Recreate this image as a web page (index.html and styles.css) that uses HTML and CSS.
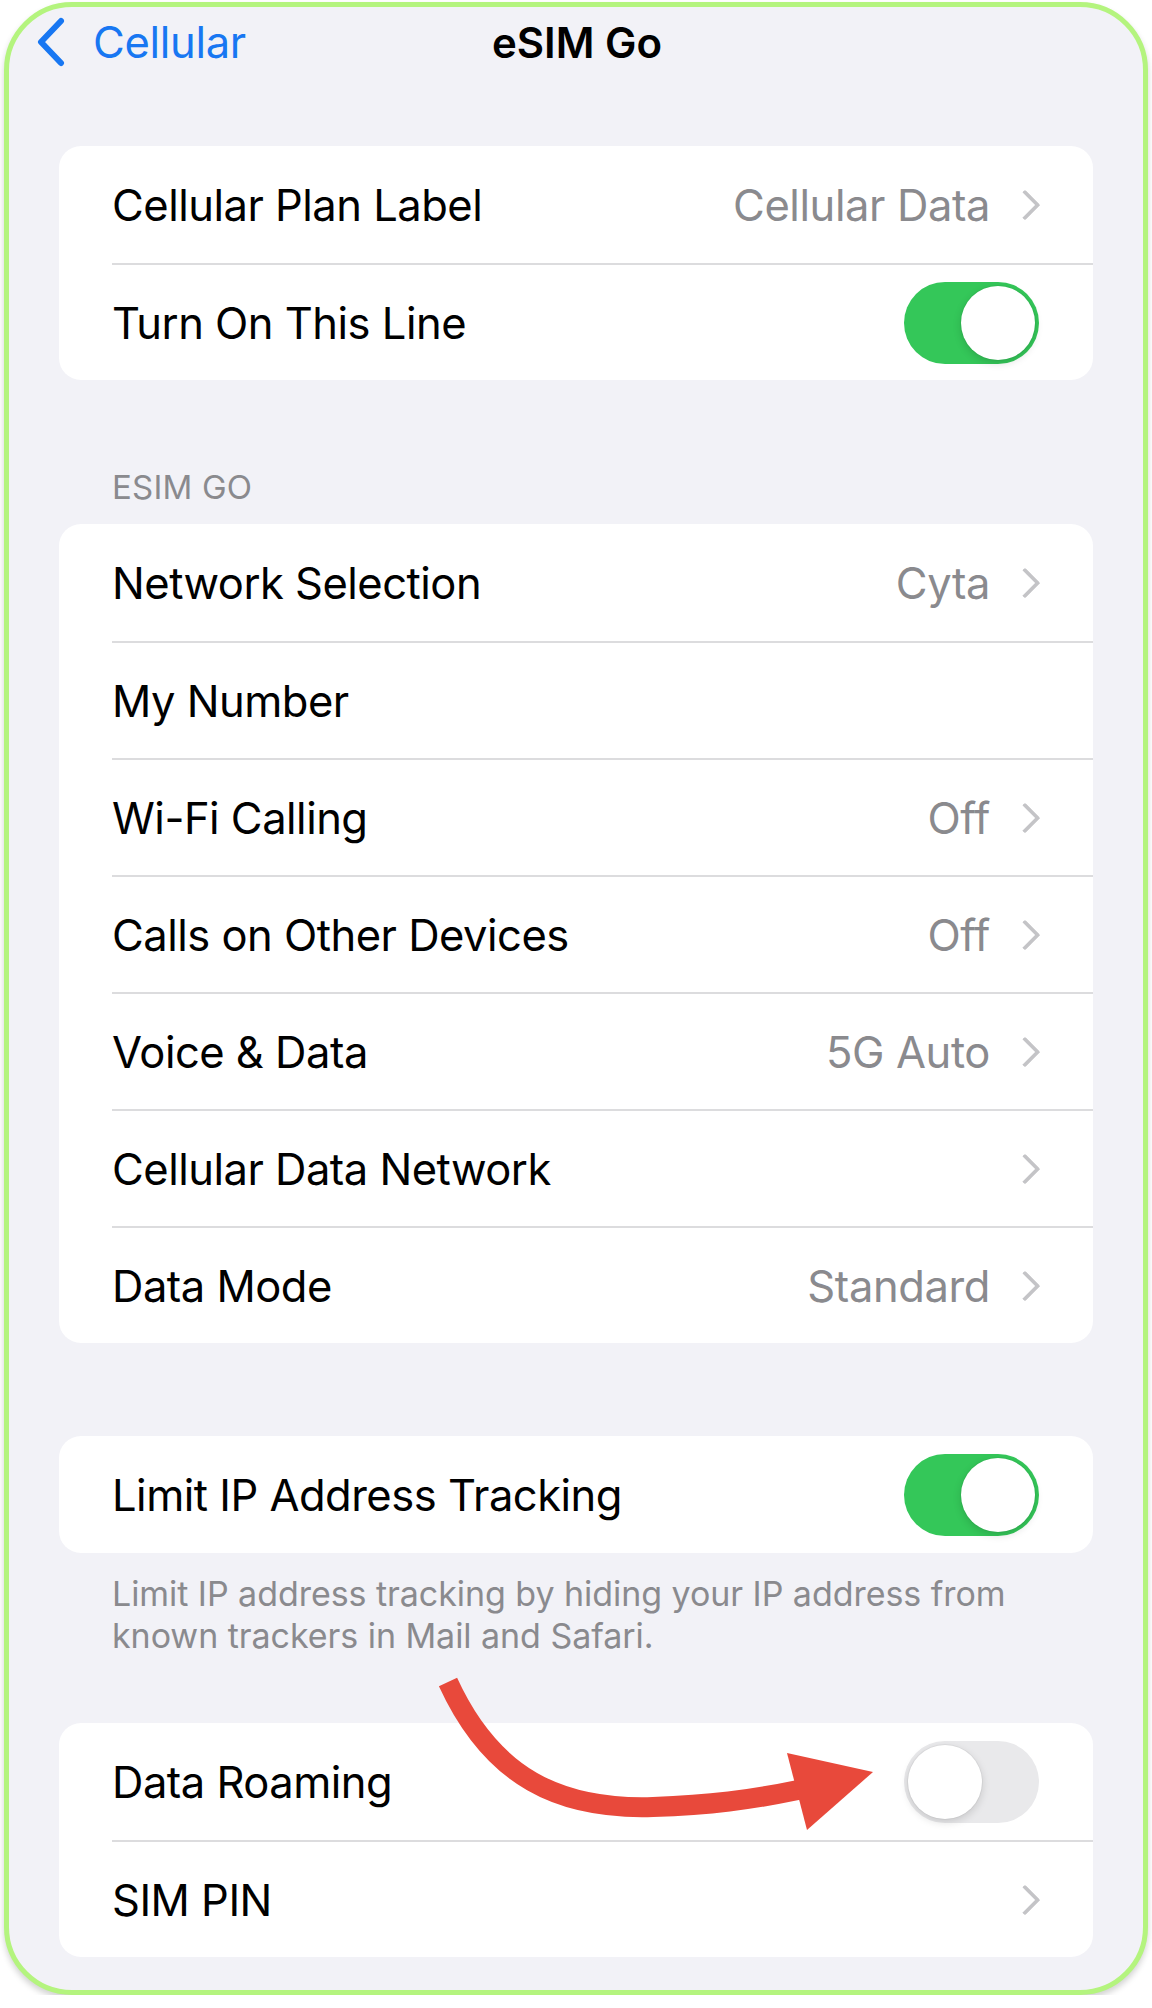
FILE: index.html
```html
<!DOCTYPE html>
<html lang="en">
<head>
<meta charset="utf-8">
<title>eSIM Go</title>
<link rel="stylesheet" href="styles.css">
</head>
<body>
<div class="screen">
  <header class="nav">
    <a class="nav-back" href="#">
      <svg class="back-chevron" viewBox="0 0 32 50" width="32" height="50" aria-hidden="true">
        <path d="M26 4 L6 25 L26 46" fill="none" stroke="#1877F2" stroke-width="6" stroke-linecap="round" stroke-linejoin="round"/>
      </svg>
      <span>Cellular</span>
    </a>
    <h1 class="nav-title">eSIM Go</h1>
  </header>

  <section class="group group-first">
    <div class="row"><div class="row-body">
      <span class="label">Cellular Plan Label</span>
      <span class="value">Cellular Data</span>
      <span class="chevron"></span>
    </div></div>
    <div class="row"><div class="row-body">
      <span class="label">Turn On This Line</span>
      <span class="switch on"><span class="knob"></span></span>
    </div></div>
  </section>

  <h2 class="group-header">ESIM GO</h2>
  <section class="group">
    <div class="row"><div class="row-body">
      <span class="label">Network Selection</span>
      <span class="value">Cyta</span>
      <span class="chevron"></span>
    </div></div>
    <div class="row"><div class="row-body">
      <span class="label">My Number</span>
    </div></div>
    <div class="row"><div class="row-body">
      <span class="label">Wi-Fi Calling</span>
      <span class="value">Off</span>
      <span class="chevron"></span>
    </div></div>
    <div class="row"><div class="row-body">
      <span class="label">Calls on Other Devices</span>
      <span class="value">Off</span>
      <span class="chevron"></span>
    </div></div>
    <div class="row"><div class="row-body">
      <span class="label">Voice &amp; Data</span>
      <span class="value">5G Auto</span>
      <span class="chevron"></span>
    </div></div>
    <div class="row"><div class="row-body">
      <span class="label">Cellular Data Network</span>
      <span class="chevron"></span>
    </div></div>
    <div class="row"><div class="row-body">
      <span class="label">Data Mode</span>
      <span class="value">Standard</span>
      <span class="chevron"></span>
    </div></div>
  </section>

  <section class="group group-spaced">
    <div class="row"><div class="row-body">
      <span class="label">Limit IP Address Tracking</span>
      <span class="switch on"><span class="knob"></span></span>
    </div></div>
  </section>
  <p class="group-footer">Limit IP address tracking by hiding your IP address from known trackers in Mail and Safari.</p>

  <section class="group group-last">
    <div class="row"><div class="row-body">
      <span class="label">Data Roaming</span>
      <span class="switch"><span class="knob"></span></span>
    </div></div>
    <div class="row"><div class="row-body">
      <span class="label">SIM PIN</span>
      <span class="chevron"></span>
    </div></div>
  </section>

  <!-- callout arrow pointing at the roaming switch -->
  <svg class="callout-arrow" viewBox="0 0 500 200" width="500" height="200" aria-hidden="true">
    <path d="M48 32 C 92 128 160 160 253 157 C 310 155 350 150 398 140" fill="none" stroke="#E8493B" stroke-width="20"/>
    <polygon points="387,103 473,122 407,180" fill="#E8493B"/>
  </svg>
</div>
</body>
</html>
```

FILE: styles.css
```css
* {
  box-sizing: border-box;
}

html, body {
  margin: 0;
  padding: 0;
  background: #ffffff;
}

body {
  font-family: Inter, "Liberation Sans", Arial, sans-serif;
  color: #000000;
  -webkit-font-smoothing: antialiased;
}

.screen {
  position: relative;
  margin: 2px 4px 0 4px;
  width: 1144px;
  height: 1993px;
  background: #F2F2F7;
  border: 5px solid #B4F47E;
  border-radius: 68px;
  padding: 0 50px 0 50px;
  box-shadow: 0 4px 6px rgba(0, 0, 0, 0.18);
}

/* navigation bar */
.nav {
  position: relative;
  height: 70px;
  display: flex;
  align-items: center;
  justify-content: center;
  margin: 0 -50px;
}

.nav-back {
  position: absolute;
  left: 26px;
  top: 9px;
  display: flex;
  align-items: center;
  gap: 26px;
  color: #1877F2;
  text-decoration: none;
  font-size: 43.5px;
  letter-spacing: -0.3px;
}

.back-chevron {
  display: block;
}

.nav-title {
  margin: 0;
  font-size: 42px;
  font-weight: 600;
  letter-spacing: 0;
  padding-top: 0;
  margin-left: 2px;
}

/* grouped list */
.group {
  background: #ffffff;
  border-radius: 22px;
  overflow: hidden;
}

.group-first {
  margin-top: 69px;
}

.group-spaced {
  margin-top: 93px;
}

.group-last {
  margin-top: 66px;
}

.group-header {
  margin: 87px 0 17px 0;
  padding-left: 53px;
  height: 40px;
  line-height: 40px;
  font-size: 33px;
  font-weight: 400;
  color: #8A8A8E;
  letter-spacing: 0.2px;
}

.group-footer {
  margin: 20px 0 0 0;
  padding: 0 40px 0 53px;
  font-size: 34px;
  line-height: 42px;
  color: #8A8A8E;
  letter-spacing: -0.05px;
}

.row {
  padding-left: 53px;
}

.row-body {
  height: 117px;
  display: flex;
  align-items: center;
  padding-right: 55px;
}

.row + .row .row-body {
  border-top: 2px solid #DCDCDE;
}

.label {
  flex: 1;
  font-size: 43.5px;
  letter-spacing: -0.5px;
}

.value {
  font-size: 43.5px;
  letter-spacing: -0.4px;
  color: #8A8A8E;
  margin-right: 29px;
}

.chevron {
  width: 19px;
  height: 30px;
  position: relative;
}

.chevron::before {
  content: "";
  position: absolute;
  left: -5px;
  top: 4px;
  width: 18px;
  height: 18px;
  border-top: 4px solid #C4C4C7;
  border-right: 4px solid #C4C4C7;
  border-radius: 2px;
  transform: rotate(45deg);
}

/* switches */
.switch {
  width: 135px;
  height: 82px;
  border-radius: 41px;
  background: #E9E9EB;
  display: flex;
  align-items: center;
  padding: 0 4px;
  margin-right: -1px;
}

.switch.on {
  background: #34C759;
  justify-content: flex-end;
}

.knob {
  width: 74px;
  height: 74px;
  border-radius: 50%;
  background: #ffffff;
  box-shadow: 0 3px 8px rgba(0, 0, 0, 0.15), 0 0 0 1px rgba(0, 0, 0, 0.04);
}

/* annotation overlay */
.callout-arrow {
  position: absolute;
  left: 391px;
  top: 1643px;
}
```
